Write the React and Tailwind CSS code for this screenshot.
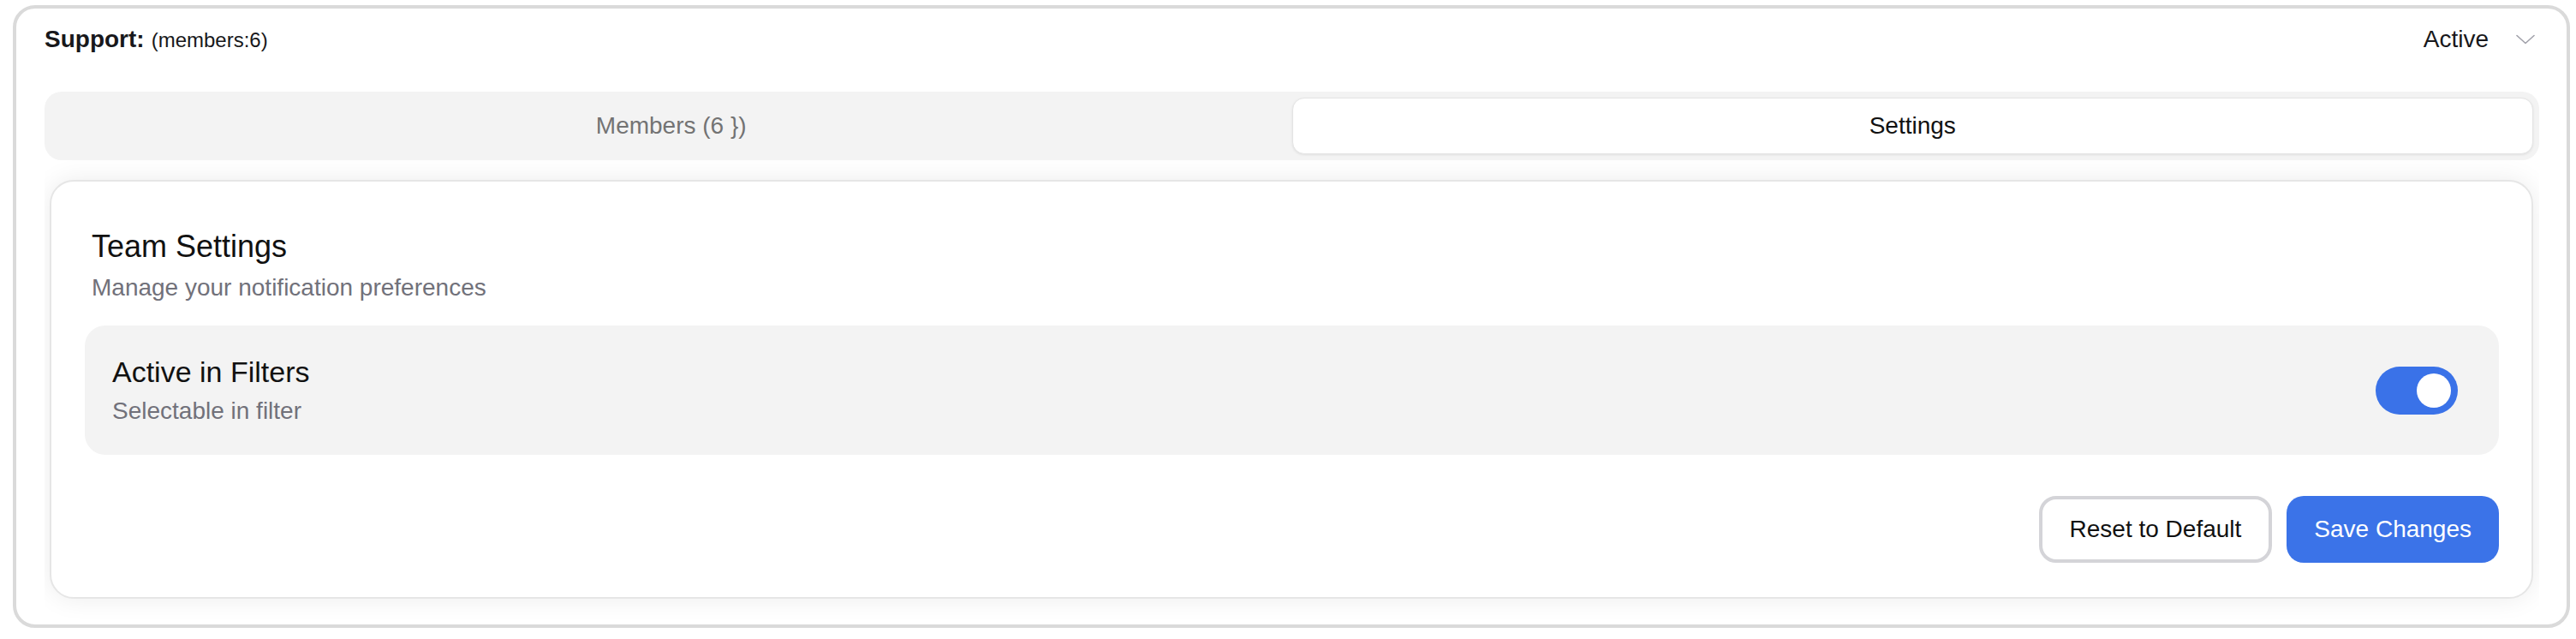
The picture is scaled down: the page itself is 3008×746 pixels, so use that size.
import React, { useState } from 'react';

function Chevron() {
  return (
    <svg width="22" height="12" viewBox="0 0 22 12" fill="none" className="mr-[5px]">
      <path d="M1 1.5 11 10.5 21 1.5" stroke="#a1a1aa" strokeWidth="1.6" strokeLinecap="round" strokeLinejoin="round" />
    </svg>
  );
}

export default function App() {
  const [tab, setTab] = useState('settings');
  const [enabled, setEnabled] = useState(true);

  return (
    <div className="min-h-screen bg-white pt-[6px] pl-[15px] pr-[7px] font-['Liberation_Sans',Arial,sans-serif] text-[#18181b]">
      <div className="rounded-[26px] border-4 border-[#dadada] bg-white pl-[33px] pr-[32px] pt-[16px] pb-[6px]">
        {/* header */}
        <div className="flex h-[40px] items-center justify-between">
          <div className="flex items-baseline gap-[8px]">
            <span className="text-[28px] font-bold leading-[40px]">Support:</span>
            <span className="text-[24px] leading-[40px]">(members:6)</span>
          </div>
          <div className="flex items-center gap-[32px]">
            <span className="text-[28px] leading-[40px]">Active</span>
            <Chevron />
          </div>
        </div>

        {/* tabs */}
        <div className="mt-[41px] grid h-[80px] grid-cols-2 rounded-[20px] bg-[#f3f3f3] p-[7px]">
          <button
            onClick={() => setTab('members')}
            className={
              tab === 'members'
                ? 'rounded-[14px] border border-[#e4e4e4] bg-white text-[28px] text-[#111] shadow-[0_1px_3px_rgba(0,0,0,0.08)]'
                : 'rounded-[14px] text-[28px] text-[#737373]'
            }
          >
            Members (6 })
          </button>
          <button
            onClick={() => setTab('settings')}
            className={
              tab === 'settings'
                ? 'rounded-[14px] border border-[#e4e4e4] bg-white text-[28px] text-[#111] shadow-[0_1px_3px_rgba(0,0,0,0.08)]'
                : 'rounded-[14px] text-[28px] text-[#737373]'
            }
          >
            Settings
          </button>
        </div>

        {/* content */}
        <div className="overflow-hidden pl-[6px] pr-[7px] pt-[23px] pb-[24px]">
          <div className="rounded-[28px] border-2 border-[#e6e6e6] bg-white pl-[39px] pr-[38px] pt-[54px] pb-[40px] shadow-[0_0_30px_rgba(0,0,0,0.08)]">
            <div className="pl-[8px]">
              <h3 className="text-[36px] leading-[44px] text-[#111]">Team Settings</h3>
              <p className="mt-[6px] text-[28px] leading-[40px] text-[#71717a]">Manage your notification preferences</p>
            </div>

            <div className="mt-[24px] flex h-[151px] items-center justify-between rounded-[24px] bg-[#f3f3f3] pl-[32px] pr-[48px]">
              <div>
                <div className="text-[34px] leading-[44px] text-[#111]">Active in Filters</div>
                <div className="mt-[4px] text-[28px] leading-[40px] text-[#71717a]">Selectable in filter</div>
              </div>
              <button
                onClick={() => setEnabled(!enabled)}
                className={
                  enabled
                    ? 'flex h-[56px] w-[96px] justify-end rounded-full bg-[#3a72e8] p-[8px]'
                    : 'flex h-[56px] w-[96px] justify-start rounded-full bg-[#d4d4d8] p-[8px]'
                }
              >
                <span className="h-[40px] w-[40px] rounded-full bg-white" />
              </button>
            </div>

            <div className="mt-[48px] flex justify-end gap-[17px]">
              <button className="h-[78px] rounded-[20px] border-4 border-[#d4d4d8] bg-white px-[32px] text-[28px] text-[#111]">
                Reset to Default
              </button>
              <button className="h-[78px] rounded-[20px] bg-[#3b73e8] px-[32px] text-[28px] text-white">
                Save Changes
              </button>
            </div>
          </div>
        </div>
      </div>
    </div>
  );
}
